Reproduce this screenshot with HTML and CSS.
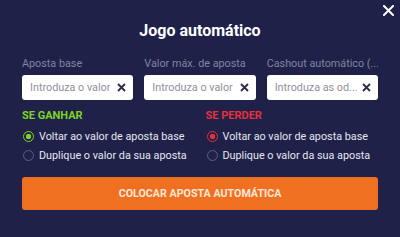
FILE: index.html
```html
<!DOCTYPE html>
<html lang="pt">
<head>
<meta charset="utf-8">
<link rel="stylesheet" href="styles.css">
</head>
<body>
<div class="modal">
  <button class="close" aria-label="Fechar">
    <svg width="11" height="11" viewBox="0 0 11 11"><path d="M1 1L10 10M10 1L1 10" stroke="#fff" stroke-width="2" stroke-linecap="square"/></svg>
  </button>
  <h1 class="title">Jogo automático</h1>
  <div class="fields">
    <div class="field">
      <label class="label">Aposta base</label>
      <div class="input"><span class="ph">Introduza o valor</span><span class="clear"><svg width="9" height="9" viewBox="0 0 9 9"><path d="M1 1L8 8M8 1L1 8" stroke="#2a2d3e" stroke-width="1.8"/></svg></span></div>
    </div>
    <div class="field">
      <label class="label">Valor máx. de aposta</label>
      <div class="input"><span class="ph">Introduza o valor</span><span class="clear"><svg width="9" height="9" viewBox="0 0 9 9"><path d="M1 1L8 8M8 1L1 8" stroke="#2a2d3e" stroke-width="1.8"/></svg></span></div>
    </div>
    <div class="field">
      <label class="label">Cashout automático (...</label>
      <div class="input"><span class="ph">Introduza as od...</span><span class="clear"><svg width="9" height="9" viewBox="0 0 9 9"><path d="M1 1L8 8M8 1L1 8" stroke="#2a2d3e" stroke-width="1.8"/></svg></span></div>
    </div>
  </div>
  <div class="options">
    <div class="group win">
      <div class="head">SE GANHAR</div>
      <div class="radio on"><span class="dot"></span>Voltar ao valor de aposta base</div>
      <div class="radio"><span class="dot"></span>Duplique o valor da sua aposta</div>
    </div>
    <div class="group lose">
      <div class="head">SE PERDER</div>
      <div class="radio on"><span class="dot"></span>Voltar ao valor de aposta base</div>
      <div class="radio"><span class="dot"></span>Duplique o valor da sua aposta</div>
    </div>
  </div>
  <button class="cta">COLOCAR APOSTA AUTOMÁTICA</button>
</div>
</body>
</html>
```
FILE: styles.css
```css
* { box-sizing: border-box; }
html, body { margin: 0; padding: 0; }
body {
  width: 400px;
  height: 237px;
  background: #1e2048;
  font-family: Roboto, "Liberation Sans", sans-serif;
  overflow: hidden;
}
.modal {
  position: relative;
  width: 400px;
  height: 237px;
  padding: 20px 22px 0 22px;
  background: #1f2149;
}
.close {
  position: absolute;
  top: 5px;
  right: 6px;
  background: none;
  border: 0;
  padding: 0;
  width: 11px;
  height: 11px;
  display: flex;
}
.title {
  margin: 0;
  text-align: center;
  color: #fff;
  font-size: 16px;
  font-weight: 700;
  line-height: 22px;
}
.fields {
  display: grid;
  grid-template-columns: repeat(3, minmax(0, 1fr));
  column-gap: 11px;
  margin-top: 15px;
}
.field { display: flex; flex-direction: column; min-width: 0; }
.label {
  color: #8184a3;
  font-size: 10.8px;
  line-height: 13px;
  margin-bottom: 5px;
  white-space: nowrap;
  overflow: hidden;
}
.input {
  height: 25px;
  background: #fff;
  border-radius: 3px;
  display: flex;
  align-items: center;
  justify-content: space-between;
  padding: 0 7px 0 8px;
}
.ph {
  color: #8f909a;
  font-size: 10.8px;
  white-space: nowrap;
  overflow: hidden;
}
.clear { display: flex; flex: none; }
.options {
  display: grid;
  grid-template-columns: repeat(2, minmax(0, 1fr));
  column-gap: 11px;
  margin-top: 9px;
}
.head {
  font-size: 11px;
  font-weight: 700;
  line-height: 14px;
  margin-bottom: 4px;
}
.win .head { color: #7ed321; }
.lose .head { color: #e5303f; }
.radio {
  display: flex;
  align-items: center;
  color: #e6e7f0;
  font-size: 10.8px;
  line-height: 19px;
  white-space: nowrap;
}
.dot {
  width: 11px;
  height: 11px;
  border-radius: 50%;
  border: 1px solid #5c5f80;
  margin: 0 5px 0 1px;
  flex: none;
}
.win .on .dot { border-color: #7ed321; background: radial-gradient(circle, #7ed321 0 2.5px, transparent 3px); }
.lose .on .dot { border-color: #e5303f; background: radial-gradient(circle, #e5303f 0 2.5px, transparent 3px); }
.cta {
  display: block;
  width: 100%;
  height: 33px;
  margin-top: 12px;
  border: 0;
  border-radius: 3px;
  background: #f07021;
  color: #fde7d8;
  font-family: Roboto, "Liberation Sans", sans-serif;
  font-weight: 700;
  font-size: 10.7px;
}
```
